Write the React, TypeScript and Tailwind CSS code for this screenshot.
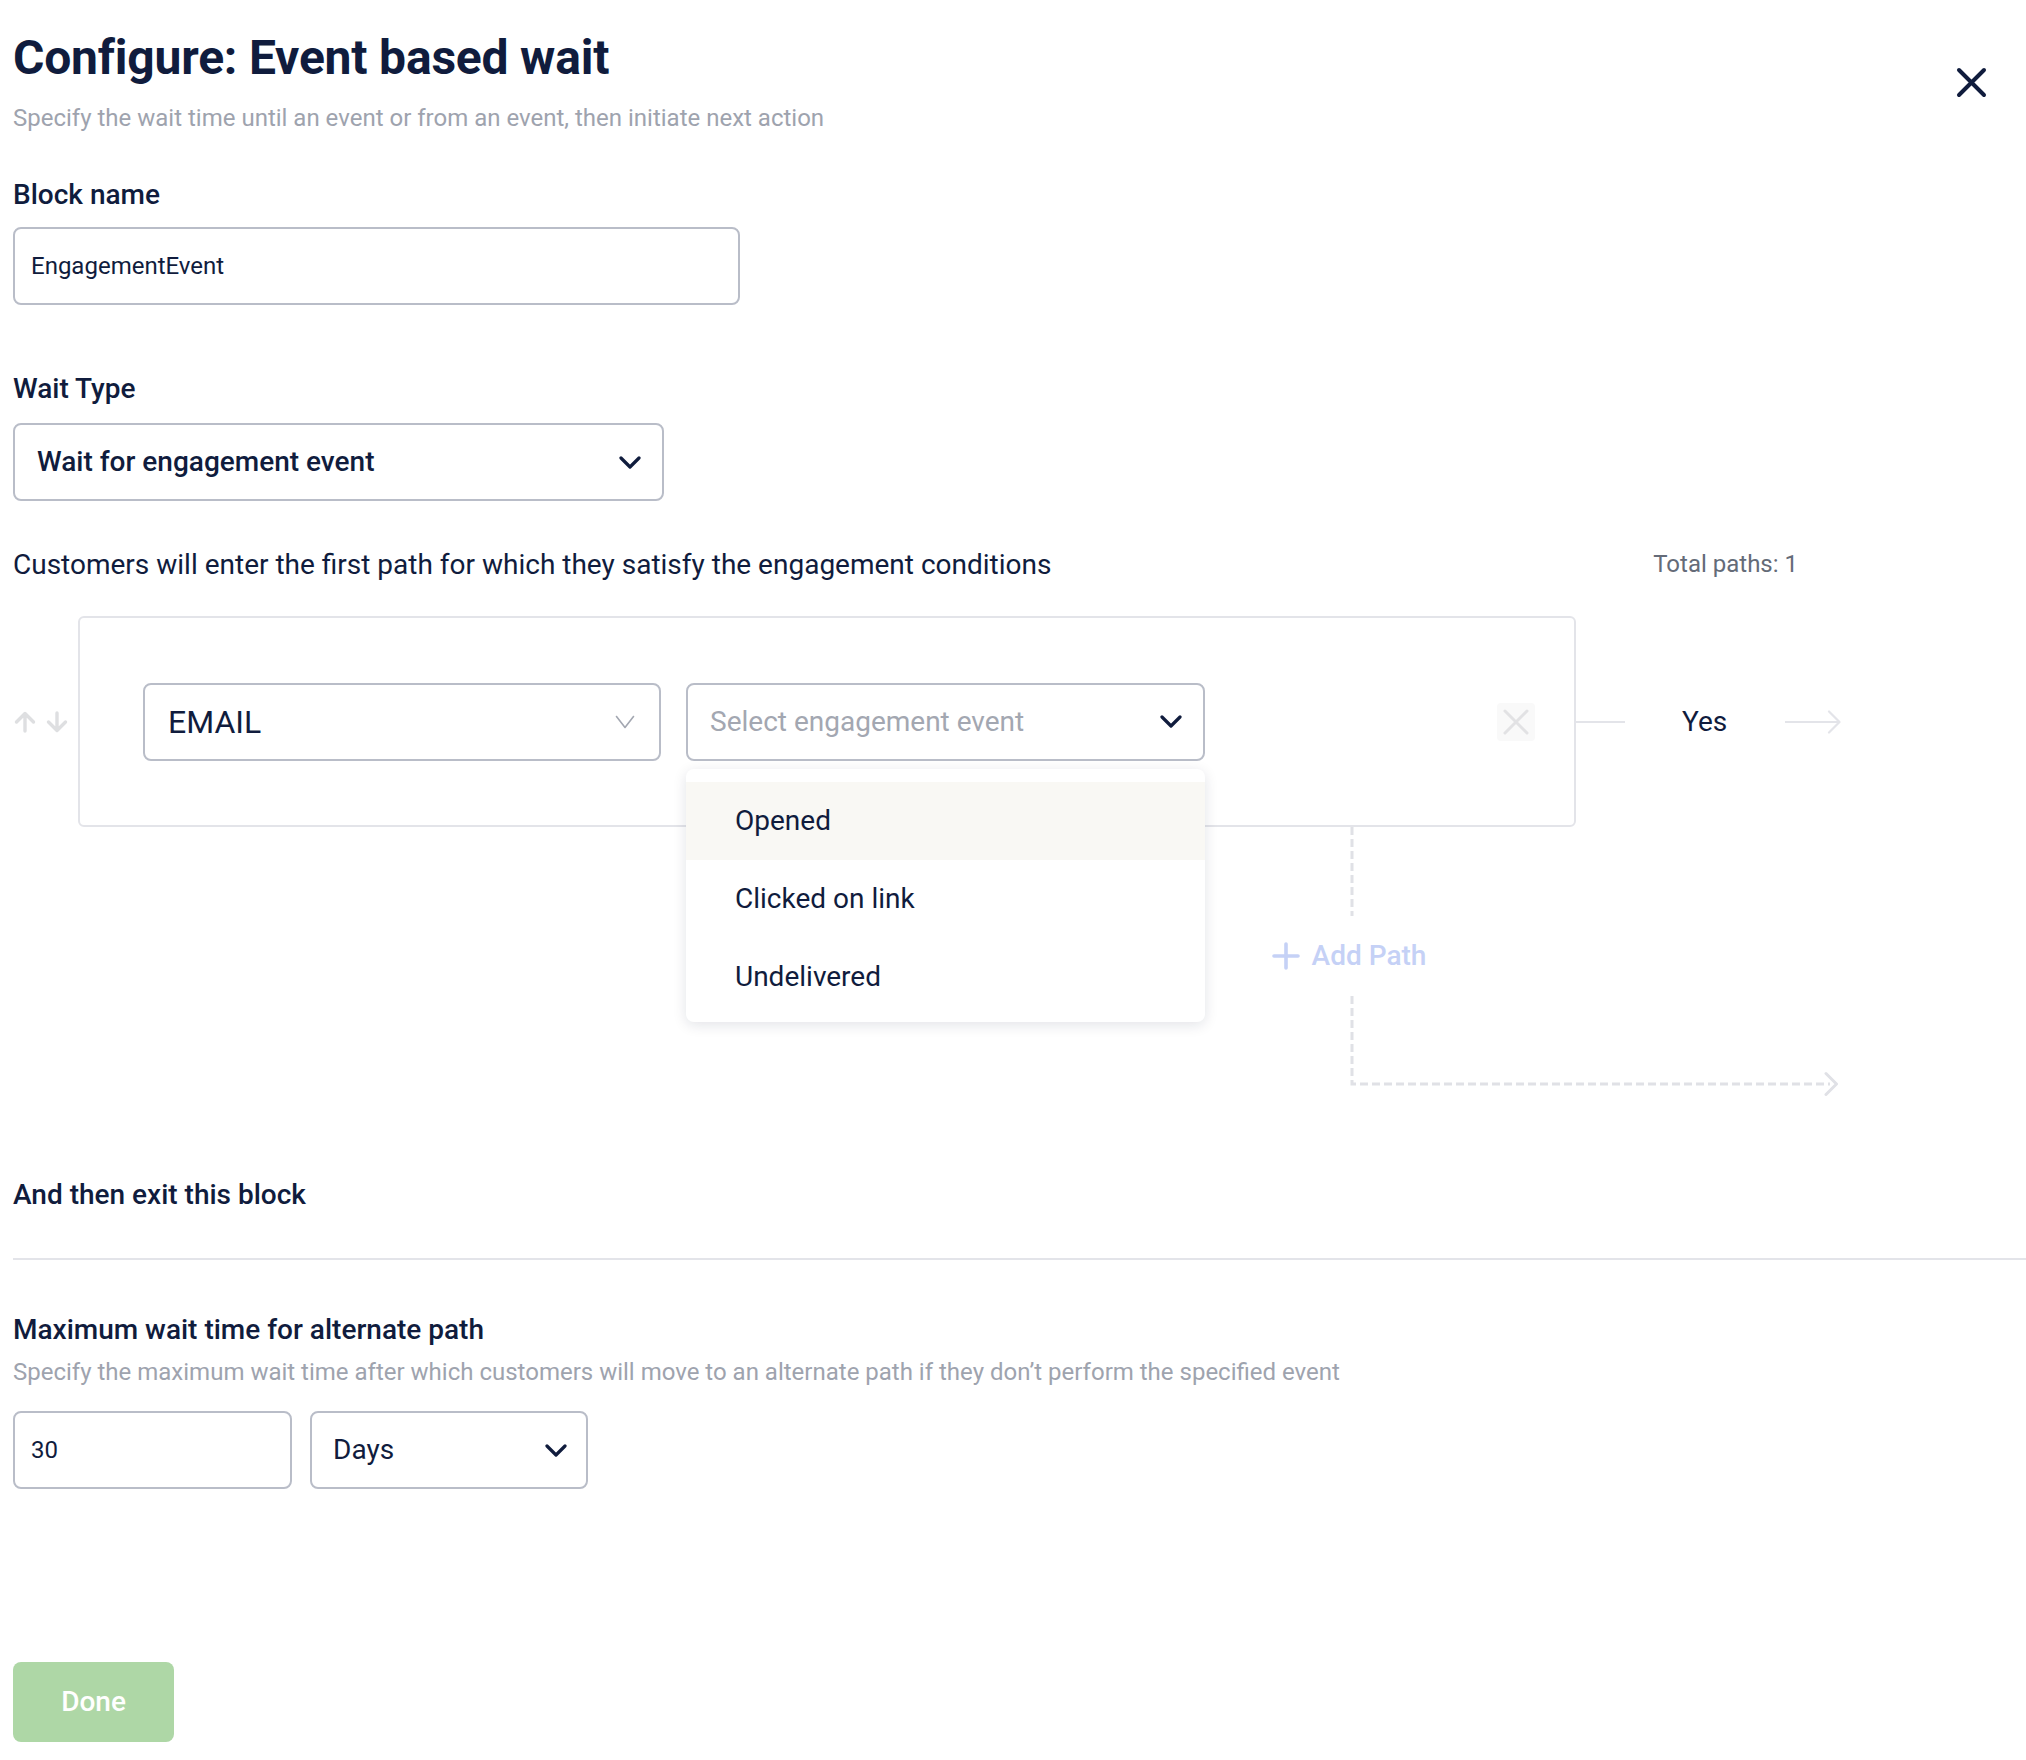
import React, { useState } from 'react';

const NAVY = 'text-[#101c3d]';

function Chevron({ className = '' }: { className?: string }) {
  return (
    <svg width="22" height="13" viewBox="0 0 22 13" fill="none" className={className}>
      <path d="M2 2 L11 11 L20 2" stroke="#101c3d" strokeWidth="3.2" strokeLinecap="round" strokeLinejoin="round" />
    </svg>
  );
}

function ThinChevron() {
  return (
    <svg width="20" height="14" viewBox="0 0 20 14" fill="none">
      <path d="M1.5 1.5 L10 12.5 L18.5 1.5" stroke="#a3a7b1" strokeWidth="1.6" strokeLinecap="round" strokeLinejoin="round" />
    </svg>
  );
}

function MoveArrow({ down = false }: { down?: boolean }) {
  return (
    <svg width="22" height="22" viewBox="0 0 22 22" fill="none" className={down ? 'rotate-180' : ''}>
      <path d="M11 20 V3 M2.5 11 L11 2.5 L19.5 11" stroke="#dedfe1" strokeWidth="3.4" strokeLinecap="round" strokeLinejoin="round" />
    </svg>
  );
}

export default function App() {
  const [hovered] = useState('Opened');
  const options = ['Opened', 'Clicked on link', 'Undelivered'];

  return (
    <div className={`min-h-screen bg-white font-['Roboto',sans-serif] ${NAVY} pl-[13px] pt-[30px]`}>
      {/* Header */}
      <div className="flex items-start justify-between pr-[39px]">
        <div>
          <h1 className="text-[48px] leading-[56px] font-bold tracking-[-0.2px]">Configure: Event based wait</h1>
          <p className="mt-[16px] text-[24px] leading-[32px] text-[#9ea3ae]">
            Specify the wait time until an event or from an event, then initiate next action
          </p>
        </div>
        <button className="mt-[37px] w-[31px] h-[31px] flex items-center justify-center">
          <svg width="31" height="31" viewBox="0 0 31 31" fill="none">
            <path d="M3 3 L28 28 M28 3 L3 28" stroke="#101c3d" strokeWidth="4" strokeLinecap="round" />
          </svg>
        </button>
      </div>

      {/* Block name */}
      <div className="mt-[43px] text-[28px] leading-[36px] font-medium">Block name</div>
      <div className="mt-[14px] w-[727px] h-[78px] border-2 border-[#b9bdc8] rounded-[8px] pl-[16px] flex items-center text-[24px]">
        EngagementEvent
      </div>

      {/* Wait type */}
      <div className="mt-[66px] text-[28px] leading-[36px] font-medium">Wait Type</div>
      <div className="mt-[16px] w-[651px] h-[78px] border-2 border-[#b9bdc8] rounded-[8px] pl-[22px] pr-[21px] flex items-center justify-between">
        <span className="text-[28px] font-medium">Wait for engagement event</span>
        <Chevron />
      </div>

      <div className="mt-[46px] w-[1785px] flex items-baseline justify-between">
        <span className="text-[28px] leading-[36px]">
          Customers will enter the first path for which they satisfy the engagement conditions
        </span>
        <span className="text-[24px] leading-[32px] text-[#646b78] relative -top-[2px]">Total paths: 1</span>
      </div>

      {/* Path row */}
      <div className="mt-[33px] flex items-center">
        <div className="ml-[1px] w-[64px] flex gap-[10px]">
          <MoveArrow />
          <MoveArrow down />
        </div>
        <div className="relative w-[1498px] h-[211px] border-2 border-[#e3e4e9] rounded-[6px] flex items-center pl-[63px]">
          <div className="w-[518px] h-[78px] border-2 border-[#b9bdc8] rounded-[8px] pl-[23px] pr-[24px] flex items-center justify-between">
            <span className="text-[32px]">EMAIL</span>
            <ThinChevron />
          </div>
          <div className="relative ml-[25px] w-[519px]">
            <div className="h-[78px] border-2 border-[#b9bdc8] rounded-[8px] pl-[22px] pr-[21px] flex items-center justify-between">
              <span className="text-[28px] text-[#a3a7b1]">Select engagement event</span>
              <Chevron />
            </div>
            <div className="absolute left-0 top-[86px] z-10 w-full bg-white rounded-[8px] shadow-[0_3px_14px_rgba(16,28,61,0.12)] pt-[13px] pb-[6px]">
              {options.map((o) => (
                <div
                  key={o}
                  className={`h-[78px] pl-[49px] flex items-center text-[28px] ${o === hovered ? 'bg-[#f9f8f4]' : ''}`}
                >
                  {o}
                </div>
              ))}
            </div>
          </div>
          <button className="ml-auto mr-[39px] w-[38px] h-[38px] rounded-[4px] bg-[#f9f9f9] flex items-center justify-center">
            <svg width="26" height="26" viewBox="0 0 26 26" fill="none">
              <path d="M2 2 L24 24 M24 2 L2 24" stroke="#e2e2e4" strokeWidth="3" strokeLinecap="round" />
            </svg>
          </button>
        </div>
        <div className="w-[49px] h-[2px] bg-[#e3e4e9]" />
        <span className="ml-[57px] text-[28px]">Yes</span>
        <svg className="ml-[58px]" width="57" height="24" viewBox="0 0 57 24" fill="none">
          <path d="M0 12 H54 M44 1.5 L54.5 12 L44 22.5" stroke="#e3e4e9" strokeWidth="2.2" strokeLinecap="round" strokeLinejoin="round" />
        </svg>
      </div>

      {/* Add path branch */}
      <div className="ml-[1337px] w-[4px] flex flex-col items-center">
        <svg width="4" height="89" viewBox="0 0 4 89" fill="none">
          <path d="M2 0 V89" stroke="#e0e1e6" strokeWidth="3" strokeDasharray="8 4" />
        </svg>
        <button className="h-[80px] mr-[6px] flex items-center gap-[12px] whitespace-nowrap text-[#c5d1f6]">
          <svg width="28" height="28" viewBox="0 0 28 28" fill="none">
            <path d="M14 2 V26 M2 14 H26" stroke="#c5d1f6" strokeWidth="3.6" strokeLinecap="round" />
          </svg>
          <span className="text-[28px] font-medium">Add Path</span>
        </button>
        <svg className="self-start" width="492" height="100" viewBox="0 0 492 100" fill="none">
          <path d="M2 0 V88 H480" stroke="#e0e1e6" strokeWidth="3" strokeDasharray="8 4" />
          <path d="M476 77.5 L486.5 88 L476 98.5" stroke="#e0e1e6" strokeWidth="3" strokeLinecap="round" strokeLinejoin="round" />
        </svg>
      </div>

      <div className="mt-[81px] text-[28px] leading-[36px] font-medium">And then exit this block</div>
      <div className="mt-[45px] h-[2px] w-full bg-[#e3e4e9]" />

      <div className="mt-[52px] text-[28px] leading-[36px] font-medium">Maximum wait time for alternate path</div>
      <p className="mt-[8px] text-[24px] leading-[32px] text-[#9ea3ae]">
        Specify the maximum wait time after which customers will move to an alternate path if they don’t perform the specified event
      </p>
      <div className="mt-[23px] flex gap-[18px]">
        <div className="w-[279px] h-[78px] border-2 border-[#b9bdc8] rounded-[8px] pl-[16px] flex items-center text-[24px]">
          30
        </div>
        <div className="w-[278px] h-[78px] border-2 border-[#b9bdc8] rounded-[8px] pl-[21px] pr-[19px] flex items-center justify-between">
          <span className="text-[28px]">Days</span>
          <Chevron />
        </div>
      </div>

      <button className="mt-[173px] w-[161px] h-[80px] rounded-[8px] bg-[#aed7a6] text-white text-[28px] font-medium">
        Done
      </button>
    </div>
  );
}
